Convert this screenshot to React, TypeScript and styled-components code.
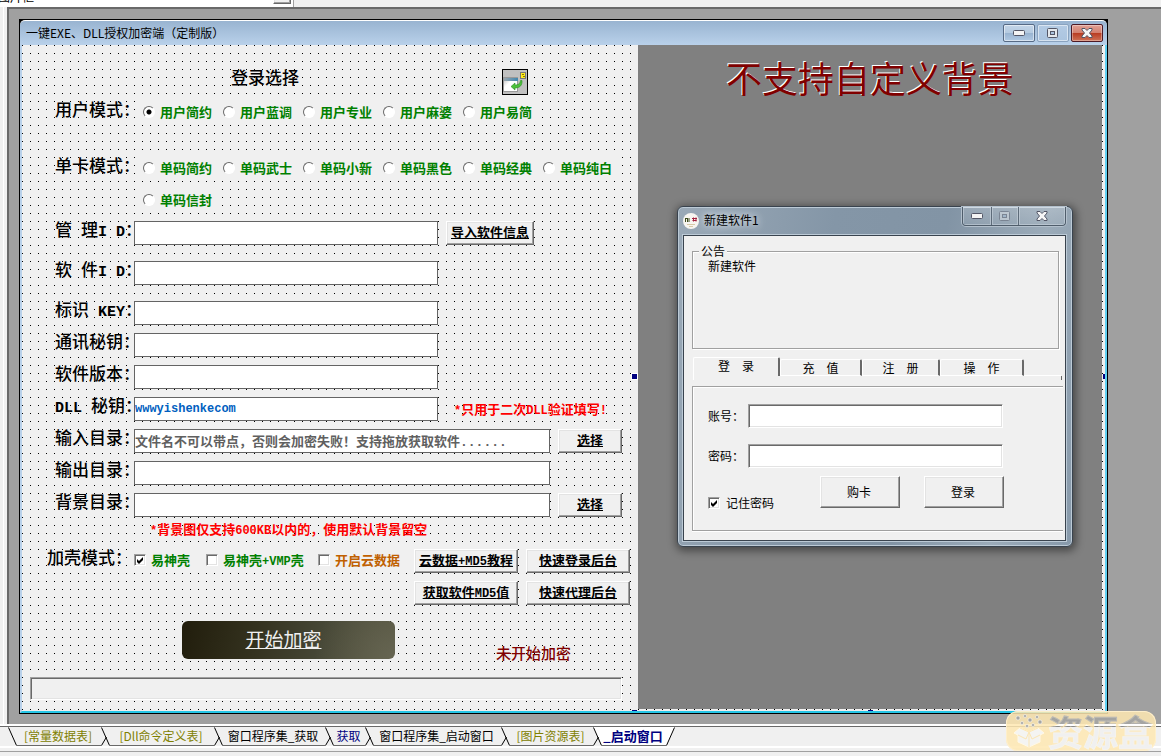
import React from "react";
import styled, { createGlobalStyle, css } from "styled-components";

const GlobalStyle = createGlobalStyle`
  *, *::before, *::after { box-sizing: border-box; }
  body {
    margin: 0;
    background: #f0f0f0;
    color: #000;
    font-family: "Noto Sans CJK SC", sans-serif;
    font-size: 12px;
    line-height: 16px;
  }
  button, input, select { font-family: inherit; }
`;

const raised = css`
  border: 1px solid;
  border-color: #fff #696969 #696969 #fff;
  background: #f0f0f0;
  box-shadow: inset -1px -1px 0 #a0a0a0, inset 1px 1px 0 #e3e3e3;
`;

const sunken = css`
  border: 1px solid;
  border-color: #a0a0a0 #fff #fff #a0a0a0;
  box-shadow: inset 1px 1px 0 #696969, inset -1px -1px 0 #e3e3e3;
`;

const Page = styled.div`
  display: flex;
  flex-direction: column;
  min-height: 100vh;
`;

/* ---------- top strip ---------- */

const TopStrip = styled.div`
  display: flex;
  height: 7px;
  overflow: hidden;
`;

const ComponentCombo = styled.div`
  display: flex;
  align-items: flex-end;
  width: 294px;
  background: #fff;
  border-right: 1px solid #a0a0a0;
`;

const ComboSelect = styled.select`
  appearance: none;
  flex: 1;
  height: 18px;
  margin: 0 0 1px -2px;
  padding: 0;
  border: 0;
  background: #fff;
  color: #000;
  font-size: 12px;
  line-height: 18px;
`;

const ComboArrow = styled.div`
  ${raised}
  width: 18px;
  height: 20px;
  margin: 0 2px 3px 0;
`;

/* ---------- MDI area ---------- */

const Workspace = styled.main`
  display: flex;
  flex: 1;
`;

const LeftGutter = styled.div`
  width: 7px;
  border-left: 3px solid #f0f0f0;
  box-shadow: inset 1px 0 0 #fff;
`;

const MdiArea = styled.div`
  flex: 1;
  display: flex;
  padding: 10px 53px 10px 10px;
  background: #a0a0a0;
  border: 0 solid #696969;
  border-width: 2px 0 0 2px;
`;

const FormWindow = styled.section`
  flex: 1;
  display: flex;
  flex-direction: column;
  border: 1px solid #000;
  background: #000;
`;

const TitleBar = styled.header`
  display: flex;
  justify-content: space-between;
  height: 25px;
  padding: 3px 4px 0 6px;
  border-top: 1px solid #fff;
  border-radius: 5px 5px 0 0;
  background: linear-gradient(#99b4d1, #b9d1ea);
`;

const TitleText = styled.h1`
  margin: 0;
  font-size: 12px;
  font-weight: 400;
  line-height: 18px;
`;

const CaptionButtons = styled.div`
  display: flex;
  gap: 2px;
`;

const CaptionButton = styled.button<{ $tone?: "close" | "dim" }>`
  display: flex;
  align-items: center;
  justify-content: center;
  width: 32px;
  height: 18px;
  padding: 0;
  border: 1px solid ${(p) => (p.$tone === "close" ? "#4d1a26" : p.$tone === "dim" ? "#8aa3bf" : "#566a85")};
  border-radius: 2px;
  background: ${(p) =>
    p.$tone === "close"
      ? "linear-gradient(#e2a195 0%, #d3806f 48%, #b83a20 50%, #cf7257 100%)"
      : p.$tone === "dim"
      ? "linear-gradient(#b4cbe4, #abc4df)"
      : "linear-gradient(#c3d5e8 0%, #b5cae0 48%, #98b3d0 50%, #b0c9e3 100%)"};
  box-shadow: inset 0 0 0 1px ${(p) => (p.$tone === "close" ? "rgba(255,255,255,.35)" : "rgba(255,255,255,.5)")};
`;

const Client = styled.div`
  flex: 1;
  display: flex;
  border: 2px solid;
  border-color: #b9d1ea #5fd0f2 #26c6e6 #b9d1ea;
  border-top: 0;
  background-color: #f0f0f0;
  background-image: linear-gradient(to right, transparent 1px, #f0f0f0 1px),
    linear-gradient(to bottom, #000 1px, #f0f0f0 1px);
  background-size: 8px 8px;
`;

/* ---------- form side ---------- */

const FormSide = styled.form`
  width: 616px;
  flex: none;
  padding-top: 24px;
`;

const HeadRow = styled.div`
  display: flex;
  justify-content: space-between;
  align-items: flex-start;
  margin: 0 110px 6px 209px;
`;

const SectionTitle = styled.h2`
  margin: 0;
  font-size: 17px;
  font-weight: 500;
  line-height: 16px;
`;

const DropIcon = styled.svg`
  display: block;
  border: 1px solid #000;
  background: #c0c0c0;
`;

const Row = styled.div<{ $start?: number; $gap?: number }>`
  display: flex;
  align-items: flex-start;
  padding-left: ${(p) => p.$start ?? 33}px;
  margin-bottom: ${(p) => p.$gap ?? 8}px;
`;

const RowLabel = styled.label<{ $wide?: boolean }>`
  flex: none;
  width: ${(p) => (p.$wide ? 87 : 79)}px;
  font-size: 17px;
  font-weight: 500;
  line-height: 16px;
  white-space: pre;
`;

const Latin = styled.span`
  font-family: "Liberation Mono", monospace;
  font-size: 15px;
  font-weight: 700;
  line-height: 1px;
`;

const SmallLatin = styled.span`
  font-family: "Liberation Mono", monospace;
  font-size: 12px;
  line-height: 1px;
`;

const RadioGrid = styled.div<{ $cols: number }>`
  display: grid;
  grid-template-columns: repeat(${(p) => p.$cols}, 80px);
  row-gap: 8px;
`;

const Option = styled.label<{ $width?: number; $orange?: boolean }>`
  display: flex;
  align-items: center;
  gap: 5px;
  width: ${(p) => (p.$width ? p.$width + "px" : "auto")};
  height: 24px;
  padding: 0 0 2px ${(p) => (p.$width ? 0 : 1)}px;
  background: #f0f0f0;
  color: ${(p) => (p.$orange ? "#c06000" : "#008000")};
  font-size: 13px;
  font-weight: 700;
  white-space: nowrap;
`;

const Radio = styled.input.attrs({ type: "radio" })`
  appearance: none;
  flex: none;
  width: 12px;
  height: 12px;
  margin: 0;
  border: 1px solid;
  border-color: #696969 #fff #fff #696969;
  border-radius: 50%;
  background: #fff;
  &:checked {
    background: radial-gradient(circle, #000 2px, #fff 3px);
  }
`;

const Check = styled.input.attrs({ type: "checkbox" })`
  appearance: none;
  ${sunken}
  flex: none;
  width: 12px;
  height: 12px;
  margin: 0;
  background: #fff;
  &:checked::after {
    content: "";
    display: block;
    width: 10px;
    height: 10px;
    background: #000;
    clip-path: polygon(20% 40%, 40% 60%, 80% 20%, 80% 50%, 40% 90%, 20% 70%);
  }
`;

const Field = styled.input.attrs({ type: "text" })<{ $long?: boolean; $tint?: string }>`
  width: ${(p) => (p.$long ? 416 : 304)}px;
  height: 24px;
  padding: 0 0 2px;
  border: 1px solid #646464;
  background: #fff;
  color: ${(p) => p.$tint ?? "#000"};
  font-family: "Liberation Mono", "Noto Sans CJK SC", monospace;
  font-size: 13px;
  font-weight: 700;
`;

const MonoField = styled(Field)`
  padding: 0;
  font-size: 12px;
`;

const PushButton = styled.button<{ $width: number }>`
  ${raised}
  width: ${(p) => p.$width}px;
  height: 24px;
  margin-left: 8px;
  padding: 0 0 2px;
  font-size: 13px;
  font-weight: 700;
  line-height: 18px;
  text-decoration: underline;
  white-space: nowrap;
  color: #000;
`;

const RedNote = styled.p<{ $start: number }>`
  margin: 4px 0 0;
  padding-left: ${(p) => p.$start}px;
  color: #f00;
  font-size: 13px;
  font-weight: 700;
  line-height: 16px;
  white-space: nowrap;
`;

const ButtonPair = styled.div`
  display: flex;
  margin-left: -8px;
`;

const ActionRow = styled.div`
  display: flex;
  align-items: flex-start;
  height: 40px;
  margin: 16px 0;
  padding-left: 160px;
`;

const StartButton = styled.button`
  width: 213px;
  height: 38px;
  padding: 0 10px 2px 0;
  border: 0;
  border-radius: 6px;
  background: radial-gradient(circle at 100% 100%, #666552, transparent 80px),
    linear-gradient(100deg, #211d0c 0%, #34321f 35%, #464736 65%, #55543f 100%);
  color: #f0f0f0;
  font-size: 19px;
  line-height: 28px;
  text-decoration: underline;
`;

const StatusText = styled.output`
  align-self: flex-end;
  margin-left: 101px;
  color: #800000;
  font-size: 15px;
  font-weight: 500;
  line-height: 16px;
`;

const ProgressTrack = styled.div`
  ${sunken}
  height: 23px;
  margin: 0 16px 0 8px;
  background: #f0f0f0;
`;

/* ---------- preview side ---------- */

const PreviewSide = styled.section`
  position: relative;
  flex: 1;
  margin: 0 3px 2px 0;
  background: #808080;
`;

const PreviewHeading = styled.h2`
  margin: 8px 0 105px;
  color: #800000;
  font-size: 36px;
  font-weight: 400;
  line-height: 48px;
  text-align: center;
  text-shadow: -1px -1px 0 #fff;
`;

const Handle = styled.i<{ $x: string; $y: string; $w?: number; $h?: number }>`
  position: absolute;
  left: ${(p) => p.$x};
  top: ${(p) => p.$y};
  width: ${(p) => p.$w ?? 5}px;
  height: ${(p) => p.$h ?? 5}px;
  background: #000080;
  outline: ${(p) => (p.$h || p.$w ? "0" : "1px solid #fff")};
`;

const Dialog = styled.section`
  width: 396px;
  margin-left: 39px;
  padding: 0 6px 5px 5px;
  border: 1px solid #39434e;
  border-radius: 6px;
  background: linear-gradient(100deg, #9aa9b7 0%, #8496a7 35%, #8294a5 60%, #9babb9 82%, #8799aa 100%);
  box-shadow: inset 0 0 0 1px #bccad6, 1px 2px 8px 2px rgba(0, 0, 0, 0.45);
`;

const DialogTitle = styled.header`
  display: flex;
  height: 28px;
  align-items: flex-start;
`;

const Avatar = styled.svg`
  margin: 6px 5px 0 0;
`;

const DialogName = styled.h3`
  flex: 1;
  margin: 4px 0 0;
  font-size: 12px;
  font-weight: 400;
  line-height: 18px;
  text-shadow: 0 0 6px #dfe6ec, 0 0 10px #dfe6ec;
`;

const DialogCaption = styled.div`
  display: flex;
  height: 19px;
  overflow: hidden;
  border: 1px solid #4f5d6b;
  border-top: 0;
  border-radius: 0 0 4px 4px;
  box-shadow: 0 0 0 1px #b3c0cc;
`;

const DialogCaptionButton = styled.button<{ $width: number }>`
  display: flex;
  align-items: center;
  justify-content: center;
  width: ${(p) => p.$width}px;
  padding: 0;
  border: 0;
  background: linear-gradient(rgba(255, 255, 255, 0.18), rgba(255, 255, 255, 0.05));
  box-shadow: inset 0 0 0 1px rgba(214, 224, 232, 0.45);
  & + & { border-left: 1px solid #5d6b79; }
`;

const DialogBody = styled.form`
  padding: 8px 2px 9px 8px;
  border: 1px solid #39434e;
  background: #f0f0f0;
  box-shadow: 0 0 0 1px #bccad6;
`;

const NoticeBox = styled.fieldset`
  height: 105px;
  margin: 0 4px 8px 0;
  padding: 0 6px;
  border: 1px solid #a0a0a0;
  box-shadow: 1px 1px 0 #fff, inset 1px 1px 0 #fff;
  legend {
    padding: 0 2px;
    background: #f0f0f0;
    line-height: 14px;
  }
  p {
    margin: 0 0 0 9px;
    line-height: 16px;
  }
`;

const TabRow = styled.div`
  display: flex;
  align-items: flex-end;
  height: 19px;
  margin: 0 2px 0 1px;
`;

const Tab = styled.button<{ $width: number; $on?: boolean }>`
  flex: none;
  width: ${(p) => p.$width}px;
  height: ${(p) => (p.$on ? 19 : 17)}px;
  padding: 0 0 ${(p) => (p.$on ? 2 : 0)}px;
  border: 1px solid #fff;
  border-right: 2px solid #696969;
  border-bottom: ${(p) => (p.$on ? "0" : "1px solid #fff")};
  border-radius: 2px 2px 0 0;
  background: #f0f0f0;
  color: #000;
  font-size: 12px;
  line-height: 14px;
`;

const TabFill = styled.div`
  flex: 1;
  border-bottom: 1px solid #fff;
`;

const TabEdge = styled.div`
  height: 4px;
  margin: 0 1px 6px;
  border: solid;
  border-width: 0 1px;
  border-color: transparent #696969 transparent #fff;
`;

const LoginPane = styled.div`
  display: flex;
  flex-direction: column;
  height: 145px;
  padding: 17px 0 0 15px;
  border: 1px solid #a0a0a0;
  border-right: 0;
  box-shadow: inset 1px 1px 0 #fff, 0 1px 0 #fff;
`;

const LoginRow = styled.label`
  display: flex;
  align-items: center;
  margin-bottom: 16px;
  span { width: 40px; }
`;

const LoginField = styled.input`
  ${sunken}
  width: 255px;
  height: 24px;
  padding: 0 3px;
  background: #fff;
  font-size: 12px;
`;

const LoginActions = styled.div`
  display: flex;
  align-items: flex-start;
  height: 34px;
  margin-top: -8px;
`;

const Remember = styled.label`
  display: flex;
  align-items: center;
  align-self: flex-end;
  gap: 6px;
  width: 112px;
  height: 14px;
`;

const LoginButton = styled.button`
  ${raised}
  width: 80px;
  height: 32px;
  margin-right: 24px;
  padding: 0 2px 2px 0;
  color: #000;
  font-size: 12px;
`;

/* ---------- document tabs ---------- */

const DocStrip = styled.nav`
  display: flex;
  height: 22px;
  padding-left: 8px;
  border-top: 2px solid #fff;
  box-shadow: inset 0 1px 0 #696969;
`;

const DocTab = styled.button<{ $width: number; $tone: string; $on?: boolean }>`
  width: ${(p) => p.$width}px;
  flex: none;
  height: 19px;
  margin-top: 1px;
  padding: 0 2px 0 0;
  border: 0;
  border-bottom: 1px solid #696969;
  background: ${(p) => (p.$on ? "#fff" : "#f0f0f0")};
  color: ${(p) => p.$tone};
  font-size: ${(p) => (p.$on ? 13 : 12)}px;
  font-weight: ${(p) => (p.$on ? 700 : 400)};
  line-height: 16px;
  white-space: nowrap;
`;

const DocEdge = styled.svg`
  flex: none;
  margin-top: 1px;
`;

const StatusStrip = styled.footer`
  height: 10px;
  border-top: 2px solid #fff;
  box-shadow: inset 0 3px 0 #f0f0f0, inset 0 4px 0 #a0a0a0;
`;

const Watermark = styled.div`
  position: fixed;
  right: 5px;
  bottom: 5px;
  display: flex;
  align-items: center;
  gap: 2px;
  width: 150px;
  height: 40px;
  padding-left: 6px;
  border-radius: 12px;
  background: rgba(254, 231, 178, 0.85);
  box-shadow: inset 0 0 0 1px rgba(255, 240, 205, 0.9);
`;

const WatermarkText = styled.span`
  font-size: 35px;
  font-weight: 700;
  line-height: 40px;
  color: transparent;
  background: linear-gradient(#a5a5a3 13px, #fff 13px, #fff 15px, #8a8a88 15px, #8a8a88 16px, #f0f0f0 16px);
  background-clip: text;
  -webkit-background-clip: text;
  -webkit-text-stroke: 1px rgba(255, 250, 235, 0.25);
  white-space: nowrap;
`;

const MinGlyph = () => (
  <svg width="12" height="6" viewBox="0 0 12 6" aria-hidden="true">
    <rect x="0.5" y="0.5" width="11" height="5" rx="1" fill="#f4f4f4" stroke="#535666" />
  </svg>
);

const MaxGlyph = ({ faded }: { faded?: boolean }) => (
  <svg width="12" height="10" viewBox="0 0 12 10" opacity={faded ? 0.45 : 1} aria-hidden="true">
    <rect x="0.5" y="0.5" width="10" height="9" rx="1" fill="#e4e8ec" stroke="#535666" />
    <rect x="3.5" y="3.5" width="4" height="3" fill="#aac3de" stroke="#535666" />
  </svg>
);

const CloseGlyph = () => (
  <svg width="12" height="10" viewBox="0 0 12 10" aria-hidden="true">
    <path
      d="M1 .5H4L6 2.5 8 .5H11V2L8.500 5 11 8V9.500H8L6 7.500 4 9.500H1V8L3.500 5 1 2z"
      fill="#f6f6f6"
      stroke="#535666"
    />
  </svg>
);

const Edge = ({ first, last, white }: { first?: boolean; last?: boolean; white?: "left" | "right" }) => (
  <DocEdge width="9" height="19" viewBox="0 0 9 19" aria-hidden="true">
    {white === "right" && <path d="M0 0H9V18H8.500z" fill="#fff" />}
    {white === "left" && <path d="M0 0H9L.5 18.500H0z" fill="#fff" />}
    {last ? (
      <path d="M.5 18.500 8.500.5" fill="none" stroke="#000" />
    ) : (
      <path d="M.5.5 8.500 18.500" fill="none" stroke="#000" />
    )}
    {!first && !last && <path d="M.5 18.500 5.500 10" fill="none" stroke="#000" />}
  </DocEdge>
);

const userModes = ["用户简约", "用户蓝调", "用户专业", "用户麻婆", "用户易简"];
const cardModes = ["单码简约", "单码武士", "单码小新", "单码黑色", "单码经典", "单码纯白", "单码信封"];

export default function App() {
  return (
    <>
      <GlobalStyle />
      <Page>
        <TopStrip>
          <ComponentCombo>
            <ComboSelect aria-label="组件">
              <option>图片框</option>
            </ComboSelect>
            <ComboArrow />
          </ComponentCombo>
        </TopStrip>

        <Workspace>
          <LeftGutter />
          <MdiArea>
            <FormWindow>
              <TitleBar>
                <TitleText>一键EXE、DLL授权加密端（定制版）</TitleText>
                <CaptionButtons>
                  <CaptionButton aria-label="最小化"><MinGlyph /></CaptionButton>
                  <CaptionButton aria-label="最大化" $tone="dim"><MaxGlyph /></CaptionButton>
                  <CaptionButton aria-label="关闭" $tone="close"><CloseGlyph /></CaptionButton>
                </CaptionButtons>
              </TitleBar>

              <Client>
                <FormSide onSubmit={(e) => e.preventDefault()}>
                  <HeadRow>
                    <SectionTitle>登录选择</SectionTitle>
                    <DropIcon width="26" height="26" viewBox="0 0 24 24" aria-hidden="true">
                      <defs>
                        <linearGradient id="bar" x1="0" x2="1">
                          <stop offset="0" stopColor="#9aa5ad" />
                          <stop offset="1" stopColor="#3f87b0" />
                        </linearGradient>
                        <linearGradient id="pane" x1="0" x2="1" y2="1">
                          <stop offset="0" stopColor="#b8b8b8" />
                          <stop offset=".4" stopColor="#fff" />
                        </linearGradient>
                      </defs>
                      <rect x="0.5" y="7.500" width="14" height="14" fill="url(#pane)" stroke="#999" />
                      <rect x="1" y="8" width="14" height="3" fill="url(#bar)" />
                      <rect x="17.500" y="2.500" width="5" height="6" fill="#ffeb1c" stroke="#777" />
                      <path d="M19 4h2v1h-2zM20 6h2v1h-2z" fill="#8a7a00" />
                      <path d="M8 16.500 12 13v2c3 0 5-1 5.500-4.500h1.500c.5 5-2.500 7.500-7 7.500V20z" fill="#4bc03a" stroke="#2c8f25" strokeWidth=".6" />
                    </DropIcon>
                  </HeadRow>

                  <Row $gap={32}>
                    <RowLabel as="span" $wide>用户模式：</RowLabel>
                    <RadioGrid $cols={5} role="radiogroup" aria-label="用户模式">
                      {userModes.map((m, i) => (
                        <Option key={m}>
                          <Radio name="mode" defaultChecked={i === 0} />
                          {m}
                        </Option>
                      ))}
                    </RadioGrid>
                  </Row>

                  <Row>
                    <RowLabel as="span" $wide>单卡模式：</RowLabel>
                    <RadioGrid $cols={6} role="radiogroup" aria-label="单卡模式">
                      {cardModes.map((m) => (
                        <Option key={m}>
                          <Radio name="mode" />
                          {m}
                        </Option>
                      ))}
                    </RadioGrid>
                  </Row>

                  <Row $gap={16}>
                    <RowLabel htmlFor="admin">管<Latin> </Latin>理<Latin>I D</Latin>：</RowLabel>
                    <Field id="admin" />
                    <PushButton type="button" $width={88}>导入软件信息</PushButton>
                  </Row>
                  <Row $gap={16}>
                    <RowLabel htmlFor="soft">软<Latin> </Latin>件<Latin>I D</Latin>：</RowLabel>
                    <Field id="soft" />
                  </Row>
                  <Row>
                    <RowLabel htmlFor="key">标识<Latin> KEY</Latin>：</RowLabel>
                    <Field id="key" />
                  </Row>
                  <Row>
                    <RowLabel htmlFor="comm">通讯秘钥：</RowLabel>
                    <Field id="comm" />
                  </Row>
                  <Row>
                    <RowLabel htmlFor="version">软件版本：</RowLabel>
                    <Field id="version" />
                  </Row>
                  <Row>
                    <RowLabel htmlFor="dll"><Latin>DLL </Latin>秘钥：</RowLabel>
                    <MonoField id="dll" $tint="#0060c0" defaultValue="wwwyishenkecom" />
                    <RedNote $start={16}>
                      <SmallLatin>*</SmallLatin>只用于二次<SmallLatin>DLL</SmallLatin>验证填写<SmallLatin>!</SmallLatin>
                    </RedNote>
                  </Row>
                  <Row>
                    <RowLabel htmlFor="input">输入目录：</RowLabel>
                    <Field
                      id="input"
                      $long
                      $tint="#606060"
                      defaultValue="文件名不可以带点，否则会加密失败！支持拖放获取软件......"
                    />
                    <PushButton type="button" $width={64}>选择</PushButton>
                  </Row>
                  <Row>
                    <RowLabel htmlFor="output">输出目录：</RowLabel>
                    <Field id="output" $long />
                  </Row>
                  <Row $gap={0}>
                    <RowLabel htmlFor="backdrop">背景目录：</RowLabel>
                    <Field id="backdrop" $long />
                    <PushButton type="button" $width={64}>选择</PushButton>
                  </Row>
                  <Row $start={0} $gap={12}>
                    <RedNote $start={128}>
                      <SmallLatin>*</SmallLatin>背景图仅支持<SmallLatin>600KB</SmallLatin>以内的，使用默认背景留空
                    </RedNote>
                  </Row>

                  <Row $start={25}>
                    <RowLabel as="span" $wide>加壳模式：</RowLabel>
                    <Option $width={72}><Check defaultChecked />易神壳</Option>
                    <Option $width={112}>
                      <Check />
                      <span>易神壳<SmallLatin>+VMP</SmallLatin>壳</span>
                    </Option>
                    <Option $width={96} $orange><Check />开启云数据</Option>
                    <ButtonPair>
                      <PushButton type="button" $width={104}>云数据<SmallLatin>+MD5</SmallLatin>教程</PushButton>
                      <PushButton type="button" $width={104}>快速登录后台</PushButton>
                    </ButtonPair>
                  </Row>
                  <Row $start={392} $gap={0}>
                    <ButtonPair>
                      <PushButton type="button" $width={104}>获取软件<SmallLatin>MD5</SmallLatin>值</PushButton>
                      <PushButton type="button" $width={104}>快速代理后台</PushButton>
                    </ButtonPair>
                  </Row>

                  <ActionRow>
                    <StartButton type="button">开始加密</StartButton>
                    <StatusText>未开始加密</StatusText>
                  </ActionRow>
                  <ProgressTrack role="progressbar" aria-label="加密进度" aria-valuenow={0} />
                </FormSide>

                <PreviewSide>
                  <Handle $x="-6px" $y="calc(50% - 3px)" />
                  <Handle $x="calc(100% + 1px)" $y="calc(50% - 3px)" $w={2} />
                  <Handle $x="-6px" $y="calc(100% + 1px)" $h={1} />
                  <Handle $x="calc(50% - 2px)" $y="calc(100% + 1px)" $h={1} />
                  <PreviewHeading>不支持自定义背景</PreviewHeading>
                  <Dialog>
                    <DialogTitle>
                      <Avatar width="16" height="16" viewBox="0 0 16 16" aria-hidden="true">
                        <circle cx="8" cy="8" r="8" fill="#f7f5f0" />
                        <path d="M2.500 5v4M2 5.500h3M4.500 5v4M6 5v4" stroke="#3c4a1c" fill="none" />
                        <path d="M9 5.500h5M9.500 7.500h4M10.500 4.500v4M13 4.500v4" stroke="#a3203f" fill="none" />
                        <path d="M4 11.500h8M6 13.500h4" stroke="#d7c9a8" fill="none" />
                      </Avatar>
                      <DialogName>新建软件1</DialogName>
                      <DialogCaption>
                        <DialogCaptionButton $width={28} aria-label="最小化"><MinGlyph /></DialogCaptionButton>
                        <DialogCaptionButton $width={27} aria-label="最大化"><MaxGlyph faded /></DialogCaptionButton>
                        <DialogCaptionButton $width={47} aria-label="关闭"><CloseGlyph /></DialogCaptionButton>
                      </DialogCaption>
                    </DialogTitle>
                    <DialogBody onSubmit={(e) => e.preventDefault()}>
                      <NoticeBox>
                        <legend>公告</legend>
                        <p>新建软件</p>
                      </NoticeBox>
                      <TabRow role="tablist">
                        <Tab type="button" role="tab" $width={87} $on>登　录</Tab>
                        <Tab type="button" role="tab" $width={82}>充　值</Tab>
                        <Tab type="button" role="tab" $width={78}>注　册</Tab>
                        <Tab type="button" role="tab" $width={84}>操　作</Tab>
                        <TabFill />
                      </TabRow>
                      <TabEdge />
                      <LoginPane>
                        <LoginRow><span>账号：</span><LoginField type="text" /></LoginRow>
                        <LoginRow><span>密码：</span><LoginField type="password" /></LoginRow>
                        <LoginActions>
                          <Remember><Check defaultChecked />记住密码</Remember>
                          <LoginButton type="button">购卡</LoginButton>
                          <LoginButton type="button">登录</LoginButton>
                        </LoginActions>
                      </LoginPane>
                    </DialogBody>
                  </Dialog>
                </PreviewSide>
              </Client>
            </FormWindow>
          </MdiArea>
        </Workspace>

        <DocStrip>
          <Edge first />
          <DocTab $width={84} $tone="#808000">[常量数据表]</DocTab>
          <Edge />
          <DocTab $width={104} $tone="#808000">[Dll命令定义表]</DocTab>
          <Edge />
          <DocTab $width={102} $tone="#000">窗口程序集_获取</DocTab>
          <Edge />
          <DocTab $width={31} $tone="#000080">获取</DocTab>
          <Edge />
          <DocTab $width={127} $tone="#000">窗口程序集_启动窗口</DocTab>
          <Edge />
          <DocTab $width={83} $tone="#808000">[图片资源表]</DocTab>
          <Edge white="right" />
          <DocTab $width={64} $tone="#000080" $on>_启动窗口</DocTab>
          <Edge last white="left" />
        </DocStrip>
        <StatusStrip />
      </Page>

      <Watermark>
        <svg width="34" height="36" viewBox="0 0 34 36" aria-hidden="true">
          <path d="M8 15 17 19 26 15 32 20 28 22V29L17 34 6 29V22L2 20z" fill="#f4f4f2" stroke="#fff8e6" />
          <path d="M8 15 17 19 26 15M6 22 14 26 17 19 20 26 28 22M17 20V34" fill="none" stroke="#fbe6b4" />
          <g fill="#a5a5a3" stroke="#fff" strokeWidth=".5">
            <circle cx="6" cy="5" r="2" />
            <circle cx="13" cy="3" r="1.500" />
            <circle cx="18" cy="7" r="2" />
            <circle cx="25" cy="4" r="1.500" />
            <circle cx="28" cy="9" r="2" />
            <circle cx="10" cy="10" r="1.500" />
            <circle cx="21" cy="12" r="1.500" />
            <circle cx="15" cy="13" r="1.500" />
          </g>
        </svg>
        <WatermarkText>资源盒</WatermarkText>
      </Watermark>
    </>
  );
}
